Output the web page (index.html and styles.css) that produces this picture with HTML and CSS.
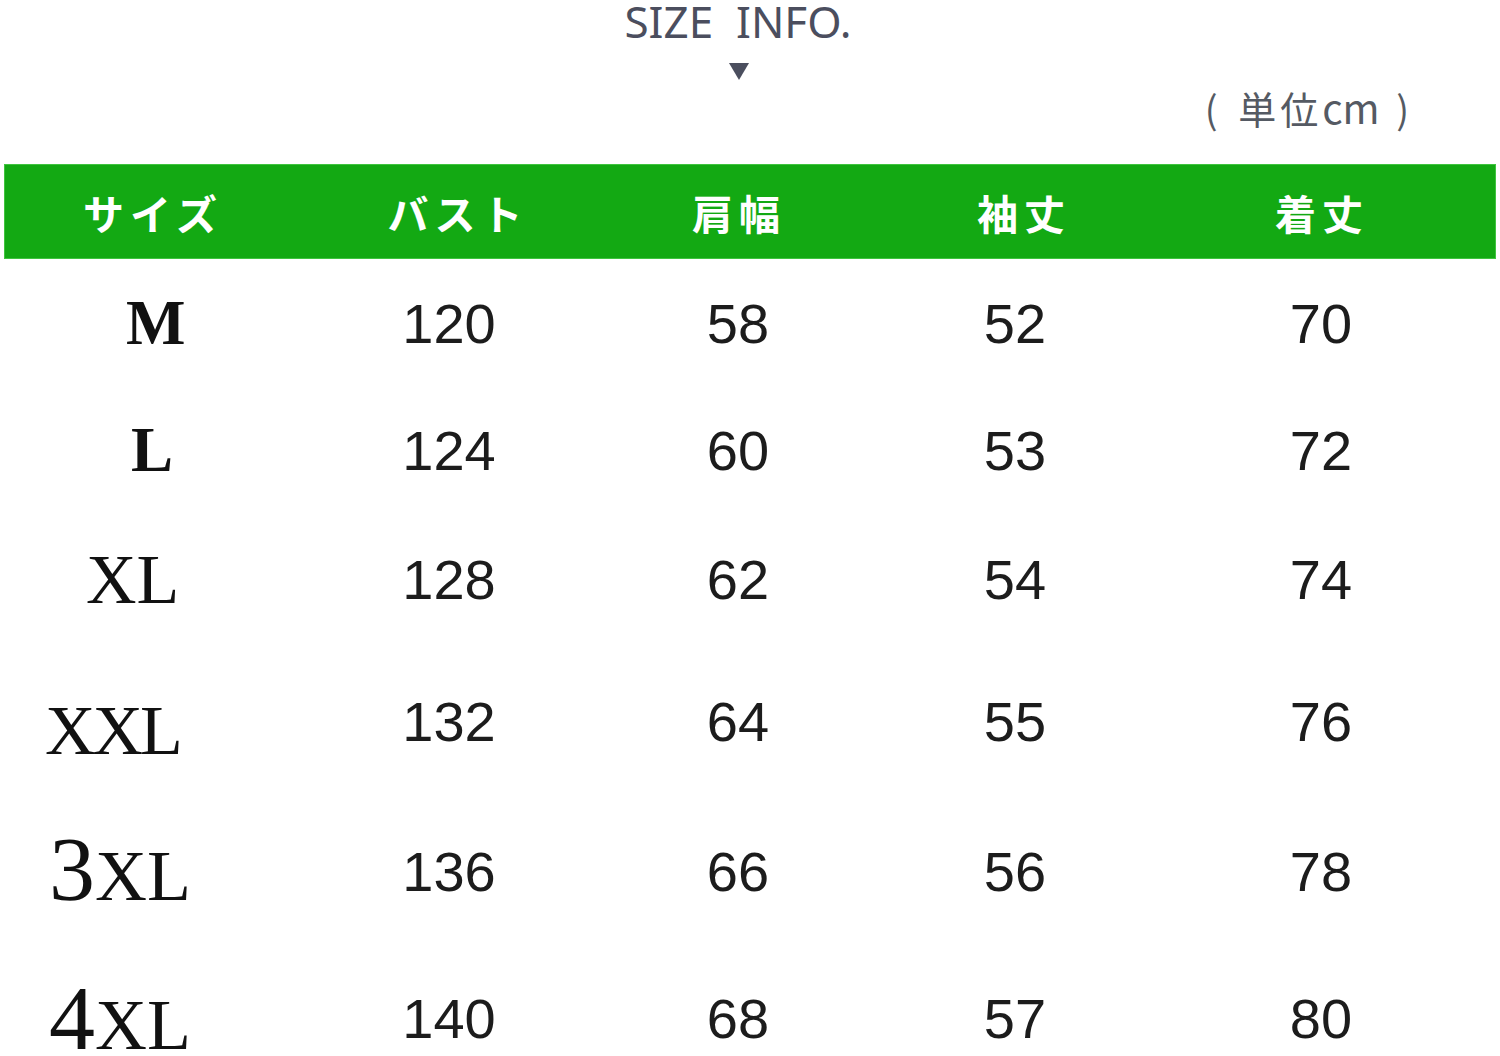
FILE: index.html
```html
<!DOCTYPE html>
<html lang="ja">
<head>
<meta charset="utf-8">
<title>SIZE INFO.</title>
<link rel="stylesheet" href="styles.css">
</head>
<body>
<div class="page">
  <header class="intro">
    <h1 class="title">SIZE&nbsp; INFO.</h1>
    <svg class="arrow" width="20" height="17" viewBox="0 0 20 17"><polygon points="0,0 20,0 10,17" fill="#4b4e5e"/></svg>
    <p class="unit">( 単位<span class="cm">cm</span> )</p>
  </header>

  <div class="table">
    <div class="head">
      <div class="hcell">サイズ</div>
      <div class="hcell shift">バスト</div>
      <div class="hcell">肩幅</div>
      <div class="hcell shift">袖丈</div>
      <div class="hcell">着丈</div>
    </div>
    <div class="body">
      <div class="size bold m">M</div><div class="num">120</div><div class="num">58</div><div class="num">52</div><div class="num">70</div>
      <div class="size bold l">L</div><div class="num">124</div><div class="num">60</div><div class="num">53</div><div class="num">72</div>
      <div class="size xl">XL</div><div class="num">128</div><div class="num">62</div><div class="num">54</div><div class="num">74</div>
      <div class="size xxl">XXL</div><div class="num">132</div><div class="num">64</div><div class="num">55</div><div class="num">76</div>
      <div class="size nxl"><span class="big">3</span>XL</div><div class="num">136</div><div class="num">66</div><div class="num">56</div><div class="num">78</div>
      <div class="size nxl last"><span class="big">4</span>XL</div><div class="num">140</div><div class="num">68</div><div class="num">57</div><div class="num">80</div>
    </div>
  </div>
</div>
</body>
</html>
```
FILE: styles.css
```css
html, body {
  margin: 0;
  padding: 0;
  background: #ffffff;
}

body {
  width: 1500px;
  height: 1056px;
  overflow: hidden;
}

.page {
  display: flex;
  flex-direction: column;
}

.intro {
  display: flex;
  flex-direction: column;
  height: 161px;
}

.title {
  margin: 0;
  padding-right: 24px;
  text-align: center;
  font-family: "Noto Sans", "DejaVu Sans", sans-serif;
  font-weight: 400;
  font-size: 44px;
  line-height: 42px;
  color: #4b4e5e;
}

.arrow {
  display: block;
  margin: 21px 0 0 729px;
}

.unit {
  margin: 5px 0 0 0;
  padding-right: 87px;
  text-align: right;
  font-family: "Noto Sans CJK JP", "Noto Sans", sans-serif;
  font-size: 38px;
  line-height: 44px;
  color: #555a63;
  letter-spacing: 4px;
  word-spacing: 4px;
}

.unit .cm {
  letter-spacing: 0;
  font-size: 40px;
}

.table {
  display: flex;
  flex-direction: column;
  margin-top: 3px;
}

.head {
  display: grid;
  grid-template-columns: 296px 298px 280px 274px 338px;
  align-items: center;
  margin: 0 4px;
  height: 95px;
  background: #13a913;
  border: 1px solid #3fc43f;
  box-sizing: border-box;
}

.hcell {
  text-align: center;
  font-family: "Noto Sans CJK JP", sans-serif;
  font-weight: 700;
  font-size: 41px;
  letter-spacing: 6px;
  color: #ffffff;
}

.hcell.shift {
  padding-left: 16px;
}

.body {
  display: grid;
  grid-template-columns: 300px 298px 280px 274px 338px;
  grid-template-rows: 127px 127px 131px 153px 147px 147px;
  align-items: center;
  padding-top: 1px;
}

.num {
  text-align: center;
  font-family: "Liberation Sans", Arial, sans-serif;
  font-size: 56px;
  line-height: 1;
  color: #1c1c1c;
}

.size {
  font-family: "Liberation Serif", "Times New Roman", serif;
  color: #111111;
  line-height: 0.8;
  white-space: nowrap;
}

.size.bold {
  font-weight: 700;
  font-size: 63px;
}

.size.m {
  padding-left: 126px;
}

.size.l {
  padding-left: 131px;
}

.size.xl {
  font-size: 70px;
  padding-left: 86px;
}

.size.xxl {
  font-size: 70px;
  padding-left: 45px;
  letter-spacing: -3px;
  margin-top: 18px;
}

.size.nxl {
  font-size: 72px;
  padding-left: 49px;
}

.size .big {
  font-size: 92px;
  line-height: 0.7;
}

.size.last,
.size.last .big {
  line-height: 0.5;
}
```
